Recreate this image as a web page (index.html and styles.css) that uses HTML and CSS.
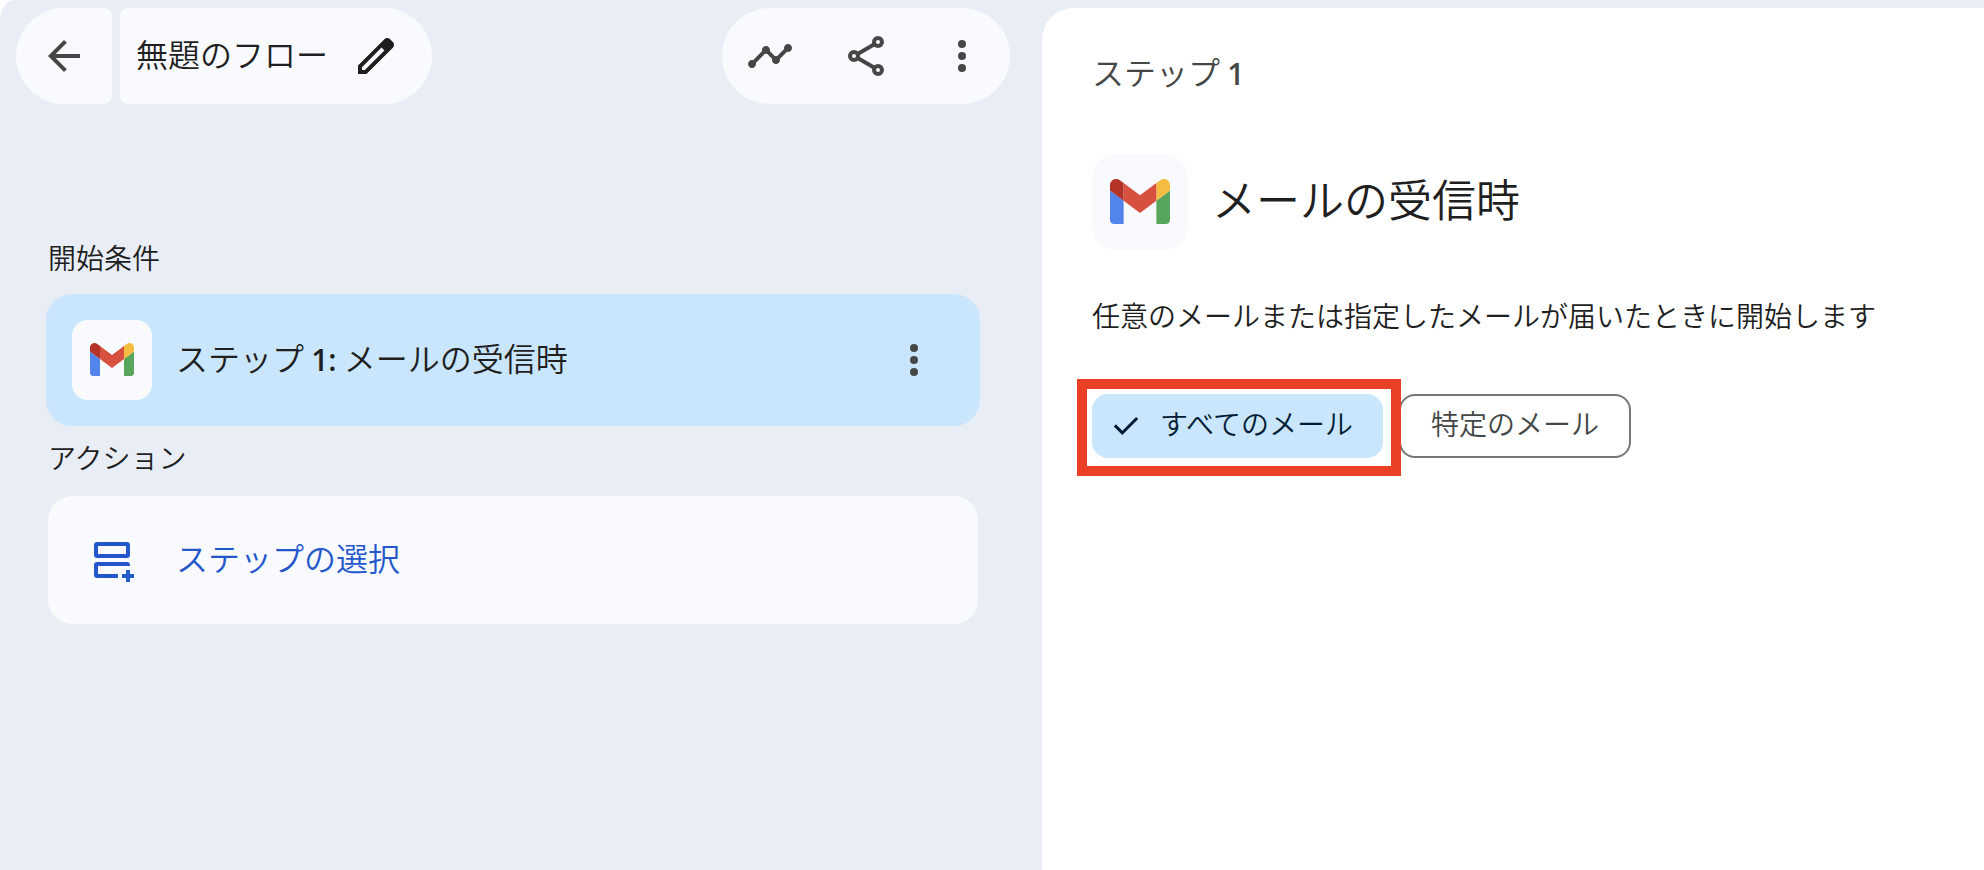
FILE: index.html
```html
<!DOCTYPE html>
<html lang="ja">

<head>
    <meta charset="UTF-8">
    <meta name="viewport" content="width=device-width, initial-scale=1.0">
    <title>無題のフロー</title>
    <link rel="stylesheet" href="styles.css">
</head>

<body>
    <!-- Gmail logo and menu dots, used on both sides -->
    <svg class="symbols" aria-hidden="true">
        <symbol id="gmail" viewBox="52 42 88 66">
            <path fill="#5284ec" d="M58 108h14V74L52 59v43c0 3.32 2.69 6 6 6"/>
            <path fill="#58a55c" d="M120 108h14c3.32 0 6-2.69 6-6V59l-20 15"/>
            <path fill="#f4bd42" d="M120 48v26l20-15v-8c0-7.42-8.47-11.65-14.4-7.2"/>
            <path fill="#d85140" d="M72 74V48l24 18 24-18v26L96 92"/>
            <path fill="#b43228" d="M52 51v8l20 15V48l-5.6-4.2c-5.94-4.45-14.4-.22-14.4 7.2"/>
        </symbol>
        <symbol id="more" viewBox="0 0 24 24">
            <circle cx="12" cy="6" r="2"/>
            <circle cx="12" cy="12" r="2"/>
            <circle cx="12" cy="18" r="2"/>
        </symbol>
    </svg>

    <div class="app">
        <main class="flow">
            <header class="topbar">
                <div class="title-group">
                    <button type="button" class="icon-btn back-btn" aria-label="戻る">
                        <svg class="icon" viewBox="0 0 24 24"><path d="M20 11H7.83l5.59-5.59L12 4l-8 8 8 8 1.41-1.41L7.83 13H20z"/></svg>
                    </button>
                    <button type="button" class="title-btn">
                        <span class="text">無題のフロー</span>
                        <svg class="icon" viewBox="0 -960 960 960"><path d="M200-200h57l391-391-57-57-391 391v57Zm-80 80v-170l528-527q12-11 26.5-17t30.5-6q16 0 31 6t26 18l55 56q12 11 17.5 26t5.5 30q0 16-5.5 30.5T817-647L290-120H120Z"/></svg>
                    </button>
                </div>
                <div class="actions">
                    <button type="button" class="icon-btn" aria-label="アクティビティ">
                        <svg class="icon" viewBox="0 0 24 24"><path d="M23 8c0 1.1-.9 2-2 2-.18 0-.35-.02-.51-.07l-3.56 3.55c.05.16.07.34.07.52 0 1.1-.9 2-2 2s-2-.9-2-2c0-.18.02-.36.07-.52l-2.55-2.55c-.16.05-.34.07-.52.07s-.36-.02-.52-.07l-4.55 4.56c.05.16.07.33.07.51 0 1.1-.9 2-2 2s-2-.9-2-2 .9-2 2-2c.18 0 .35.02.51.07l4.56-4.55C8.02 9.36 8 9.18 8 9c0-1.1.9-2 2-2s2 .9 2 2c0 .18-.02.36-.07.52l2.55 2.55c.16-.05.34-.07.52-.07s.36.02.52.07l3.55-3.56C19.02 8.35 19 8.18 19 8c0-1.1.9-2 2-2s2 .9 2 2z"/></svg>
                    </button>
                    <button type="button" class="icon-btn" aria-label="共有">
                        <svg class="icon line" viewBox="0 0 24 24">
                            <circle cx="18" cy="5" r="2"/>
                            <circle cx="6" cy="12" r="2"/>
                            <circle cx="18" cy="19" r="2"/>
                            <path d="M7.8 11l8.4-4.9M7.8 13l8.4 4.9"/>
                        </svg>
                    </button>
                    <button type="button" class="icon-btn" aria-label="その他">
                        <svg class="icon"><use href="#more"/></svg>
                    </button>
                </div>
            </header>

            <div class="steps">
                <h2 class="section-label">開始条件</h2>
                <div class="card selected">
                    <span class="app-icon"><svg class="gmail"><use href="#gmail"/></svg></span>
                    <span class="card-title text">ステップ <b>1:</b> メールの受信時</span>
                    <button type="button" class="more-btn" aria-label="ステップのメニュー">
                        <svg class="icon"><use href="#more"/></svg>
                    </button>
                </div>

                <h2 class="section-label">アクション</h2>
                <button type="button" class="card add-step">
                    <svg class="icon line" viewBox="0 0 24 24">
                        <rect x="4" y="4" width="16" height="6" rx=".5"/>
                        <path d="M20 15v-.5q0-.5-.5-.5h-15q-.5 0-.5.5v5q0 .5.5.5H15M20 17v6M17 20h6"/>
                    </svg>
                    <span class="text">ステップの選択</span>
                </button>
            </div>
        </main>

        <aside class="detail">
            <p class="step-no">ステップ <b>1</b></p>
            <div class="detail-header">
                <span class="app-icon large"><svg class="gmail"><use href="#gmail"/></svg></span>
                <h1>メールの受信時</h1>
            </div>
            <p class="description">任意のメールまたは指定したメールが届いたときに開始します</p>
            <div class="chips">
                <div class="highlight">
                    <button type="button" class="chip chip-on" aria-pressed="true">
                        <svg class="check" viewBox="0 0 24 24"><path d="M9.55 18l-5.7-5.7 1.42-1.43 4.28 4.28 9.18-9.18 1.42 1.43z"/></svg>
                        <span class="text">すべてのメール</span>
                    </button>
                </div>
                <button type="button" class="chip" aria-pressed="false"><span class="text">特定のメール</span></button>
            </div>
        </aside>
    </div>
</body>

</html>
```
FILE: styles.css
```css
* {
    box-sizing: border-box;
}

body {
    margin: 0;
    background-color: #ffffff;
    color: #1f1f1f;
    font-family: "Noto Sans CJK JP", sans-serif;
    font-weight: 350;
}

h1, h2, p {
    margin: 0;
    font-weight: inherit;
}

b {
    font-family: "Open Sans", sans-serif;
    font-size: 30px;
    font-weight: 600;
    line-height: 1;
}

button {
    margin: 0;
    padding: 0;
    border: none;
    background: none;
    color: inherit;
    font: inherit;
    cursor: pointer;
}

.symbols {
    display: none;
}

.app {
    display: grid;
    grid-template-columns: 1042fr 942fr;
    min-height: 100vh;
    background-color: #e9eef6;
    border-top-left-radius: 14px 22px;
}

.icon {
    display: block;
    flex: none;
    width: 48px;
    height: 48px;
    fill: currentColor;
}

.icon.line {
    fill: none;
    stroke: currentColor;
    stroke-width: 2;
}

/* Japanese glyphs sit low in their line box */
.text {
    padding-bottom: 6px;
}

/* Top bar */
.topbar {
    display: flex;
    justify-content: space-between;
    padding: 8px 32px 0 16px;
}

.title-group {
    display: flex;
    gap: 8px;
}

.icon-btn {
    display: flex;
    align-items: center;
    justify-content: center;
    width: 96px;
    height: 96px;
    color: #444746;
}

.back-btn {
    background-color: #f8fafd;
    border-radius: 48px 8px 8px 48px;
}

.title-btn {
    display: flex;
    align-items: center;
    gap: 24px;
    padding: 0 32px 0 16px;
    background-color: #f8fafd;
    border-radius: 8px 48px 48px 8px;
    font-size: 32px;
}

.actions {
    display: flex;
    background-color: #f8fafd;
    border-radius: 48px;
}

/* Step list */
.steps {
    padding: 122px 62px 0 46px;
}

.section-label {
    padding: 11px 2px 17px;
    font-size: 28px;
    line-height: 40px;
}

.card {
    display: flex;
    align-items: center;
    gap: 24px;
    width: 100%;
    min-height: 132px;
    padding: 24px;
    border: 2px solid transparent;
    border-radius: 26px;
    background-color: #f8fafd;
    background-clip: padding-box;
    font-size: 32px;
    text-align: left;
}

.selected {
    background-color: #cae6fc;
    border-color: #cae6fc;
}

.card-title {
    flex: 1;
}

.more-btn {
    padding: 0 16px;
    color: #444746;
}

.add-step {
    gap: 40px;
    padding: 24px 40px;
    color: #2557cc;
}

.app-icon {
    display: flex;
    align-items: center;
    justify-content: center;
    flex: none;
    width: 80px;
    height: 80px;
    padding-bottom: 2px;
    border-radius: 16px;
    background-color: #f8fafd;
}

.gmail {
    width: 44px;
    height: 33px;
}

.large {
    width: 96px;
    height: 96px;
    border-radius: 24px;
}

.large .gmail {
    width: 60px;
    height: 45px;
}

/* Detail panel */
.detail {
    margin-top: 8px;
    padding: 43px 48px 0 50px;
    background-color: #ffffff;
    border-top-left-radius: 32px;
}

.step-no {
    color: #444746;
    font-size: 32px;
    line-height: 40px;
}

.detail-header {
    display: flex;
    align-items: center;
    gap: 24px;
    margin: 63px 0 45px;
}

.detail-header h1 {
    padding-bottom: 8px;
    font-size: 44px;
}

.description {
    font-size: 28px;
    line-height: 40px;
}

.chips {
    display: flex;
    gap: 16px;
    margin-top: 59px;
}

.chip {
    display: flex;
    align-items: center;
    gap: 16px;
    height: 64px;
    padding: 0 30px;
    border: 2px solid #747775;
    border-radius: 16px;
    color: #444746;
    font-size: 28px;
}

.chip-on {
    padding: 0 30px 0 16px;
    border: none;
    background-color: #cae6fc;
    color: #001d35;
}

.check {
    width: 36px;
    height: 36px;
    fill: currentColor;
}

/* Red frame around the selected chip */
.highlight {
    position: relative;
}

.highlight::after {
    content: "";
    position: absolute;
    z-index: 1;
    inset: -15px -18px -18px -15px;
    border: 10px solid #ea4025;
    pointer-events: none;
}
```
